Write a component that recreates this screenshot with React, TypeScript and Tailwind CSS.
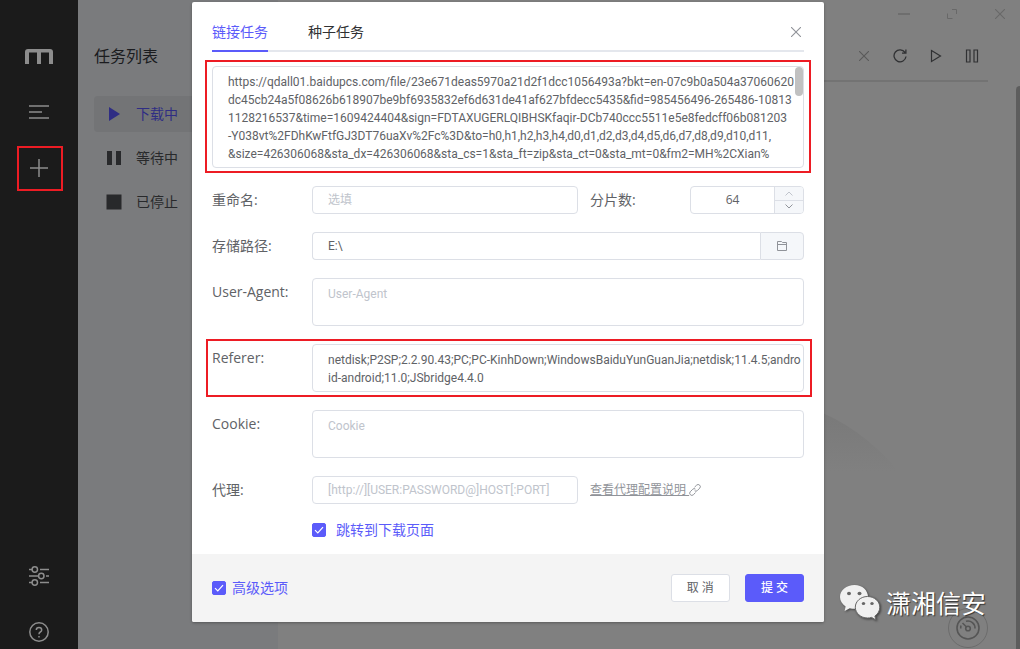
import { useState } from "react";
import type { ReactNode } from "react";

const SOURCE_URL = [
  "https://qdall01.baidupcs.com/file/23e671deas5970a21d2f1dcc1056493a?bkt=en-07c9b0a504a37060620",
  "dc45cb24a5f08626b618907be9bf6935832ef6d631de41af627bfdecc5435&fid=985456496-265486-10813",
  "1128216537&time=1609424404&sign=FDTAXUGERLQIBHSKfaqir-DCb740ccc5511e5e8fedcff06b081203",
  "-Y038vt%2FDhKwFtfGJ3DT76uaXv%2Fc%3D&to=h0,h1,h2,h3,h4,d0,d1,d2,d3,d4,d5,d6,d7,d8,d9,d10,d11,",
  "&size=426306068&sta_dx=426306068&sta_cs=1&sta_ft=zip&sta_ct=0&sta_mt=0&fm2=MH%2CXian%",
].join("\n");

const REFERER = [
  "netdisk;P2SP;2.2.90.43;PC;PC-KinhDown;WindowsBaiduYunGuanJia;netdisk;11.4.5;andro",
  "id-android;11.0;JSbridge4.4.0",
].join("\n");

const box =
  "block w-full min-w-0 rounded border border-[#dcdfe6] bg-white px-[15px] font-['Roboto','Noto_Sans_CJK_SC',sans-serif] text-xs text-[#606266] outline-none placeholder:text-[#c0c4cc]";
const singleLine = `${box} h-7`;
const multiLine = `${box} resize-none overflow-hidden whitespace-pre py-1.5 leading-[18px]`;

function Highlight({ className }: { className: string }) {
  return <div className={`pointer-events-none absolute border-2 border-[#ed1c24] ${className}`} />;
}

function Field({ id, label, children }: { id: string; label: string; children: ReactNode }) {
  return (
    <div className="relative flex">
      <label htmlFor={id} className="w-[100px] shrink-0 text-sm leading-7 text-[#606266]">
        {label}
      </label>
      <div className="flex min-w-0 flex-1">{children}</div>
    </div>
  );
}

function Check({ id, label, gap }: { id: string; label: string; gap: string }) {
  const [on, setOn] = useState(true);
  return (
    <label htmlFor={id} className={`flex items-center text-sm leading-4 text-[#5b5bfa] ${gap}`}>
      <span className="relative size-3.5">
        <input
          id={id}
          type="checkbox"
          checked={on}
          onChange={() => setOn(!on)}
          className="block size-3.5 appearance-none rounded-xs border border-[#dcdfe6] bg-white checked:border-[#5b5bfa] checked:bg-[#5b5bfa]"
        />
        {on && (
          <svg viewBox="0 0 14 14" className="pointer-events-none absolute inset-0 size-3.5" fill="none" stroke="#fff" strokeWidth="1.2">
            <path d="M3 7.2 5.8 10 11 4.2" />
          </svg>
        )}
      </span>
      {label}
    </label>
  );
}

function Rail() {
  const item = "flex h-5 w-full items-center justify-center";
  return (
    <nav className="flex w-[78px] shrink-0 flex-col bg-[#1b1b1b] pt-[46px] pb-[7px] text-[#8d8d8d]">
      <div className={item}>
        <svg width="28" height="15" viewBox="0 0 28 15" fill="none" stroke="currentColor">
          <path d="M2 15V3M14 3v12M26 15V3" strokeWidth="4" />
          <path d="M0 3.5V3Q0 0 3 0H25Q28 0 28 3V3.5Z" fill="currentColor" stroke="none" />
        </svg>
      </div>
      <button aria-label="列表" className={`${item} mt-9`}>
        <svg width="20" height="14" viewBox="0 0 20 14" stroke="currentColor" strokeWidth="1.5">
          <path d="M0 1H20M0 7H13M0 13H20" />
        </svg>
      </button>
      <button aria-label="新建" className={`${item} relative mt-9`}>
        <svg width="18" height="18" viewBox="0 0 18 18" stroke="currentColor" strokeWidth="1.5">
          <path d="M0 9H18M9 0V18" />
        </svg>
        <Highlight className="-top-3 right-[15px] -bottom-[13px] left-[17px]" />
      </button>
      <button aria-label="设置" className={`${item} mt-auto`}>
        <svg width="20" height="20" viewBox="0 0 20 20" fill="none" stroke="currentColor" strokeWidth="1.5">
          <path d="M0 3.5H3M11 3.5H20M0 10H9.5M17 10H20M0 16.5H3M11 16.5H20" />
          <circle cx="5.8" cy="3.5" r="2.7" />
          <circle cx="12.3" cy="10" r="2.7" />
          <circle cx="5.8" cy="16.5" r="2.7" />
        </svg>
      </button>
      <button aria-label="帮助" className={`${item} mt-9`}>
        <svg width="20" height="20" viewBox="0 0 20 20" fill="none" stroke="currentColor" strokeWidth="1.5">
          <circle cx="10" cy="10" r="9.2" />
          <path d="M7.3 8Q7.3 5.5 10 5.5T12.7 8Q12.7 9.2 11.3 10T10 12.3" />
          <path d="M10 14V15.6" />
        </svg>
      </button>
    </nav>
  );
}

function TaskMenu() {
  const item = "flex h-9 w-full items-center gap-3.5 rounded-l px-3 text-sm";
  return (
    <aside className="w-[200px] shrink-0 bg-[#7a7b7d] pt-11 pl-4 text-[#28292b]">
      <h2 className="text-base leading-6 text-[#1b1c1f]">任务列表</h2>
      <ul className="mt-7 space-y-2">
        <li>
          <button className={`${item} bg-[#737476] text-[#2f2d84]`}>
            <svg width="16" height="16" viewBox="0 0 16 16" fill="currentColor">
              <path d="M3 1 14 8 3 15Z" />
            </svg>
            下载中
          </button>
        </li>
        <li>
          <button className={item}>
            <svg width="16" height="16" viewBox="0 0 16 16" fill="currentColor">
              <path d="M1 1H6V15H1ZM10 1H15V15H10Z" />
            </svg>
            等待中
          </button>
        </li>
        <li>
          <button className={item}>
            <svg width="16" height="16" viewBox="0 0 16 16" fill="currentColor">
              <path d="M.5 .5H15.5V15.5H.5Z" />
            </svg>
            已停止
          </button>
        </li>
      </ul>
    </aside>
  );
}

function TaskArea() {
  const tool = "flex size-5 items-center justify-center";
  return (
    <main className="relative min-w-0 flex-1 bg-[#808080] px-7">
      <div className="-mr-[22px] flex h-7 items-center justify-end gap-7 text-[#686868]">
        <button aria-label="最小化" className={tool}>
          <svg width="12" height="12" viewBox="0 0 12 12" stroke="currentColor" strokeWidth="1.5">
            <path d="M0 6H12" />
          </svg>
        </button>
        <button aria-label="最大化" className={tool}>
          <svg width="10" height="10" viewBox="0 0 10 10" fill="none" stroke="currentColor">
            <path d="M5 .5H9.5V5M.5 4.500V9.5H5.500" />
          </svg>
        </button>
        <button aria-label="关闭窗口" className={tool}>
          <svg width="10" height="10" viewBox="0 0 10 10" stroke="currentColor" strokeWidth="1.1">
            <path d="M0 0 10 10M10 0 0 10" />
          </svg>
        </button>
      </div>
      <div className="flex h-[54px] items-center justify-end gap-4 border-b-2 border-[#737373] pt-1 pr-1.5 text-[#303133]">
        <button aria-label="删除" className={`${tool} text-[#5a5a5a]`}>
          <svg width="10" height="10" viewBox="0 0 10 10" stroke="currentColor" strokeWidth="1.1">
            <path d="M0 0 10 10M10 0 0 10" />
          </svg>
        </button>
        <button aria-label="刷新" className={tool}>
          <svg width="14" height="14" viewBox="0 0 14 14" fill="none" stroke="currentColor" strokeWidth="1.3">
            <path d="M12 3.4A6 6 0 1 0 13 7.5M12.9 .6V4.2H9" />
          </svg>
        </button>
        <button aria-label="开始" className={tool}>
          <svg width="12" height="14" viewBox="0 0 12 14" fill="none" stroke="currentColor" strokeWidth="1.2">
            <path d="M1.5 1.5 10.5 7 1.5 12.5Z" />
          </svg>
        </button>
        <button aria-label="暂停" className={tool}>
          <svg width="14" height="14" viewBox="0 0 14 14" fill="none" stroke="currentColor" strokeWidth="1.2">
            <path d="M1.5 1H5V13H1.5ZM9 1H12.5V13H9Z" />
          </svg>
        </button>
      </div>
      <svg viewBox="0 0 280 64" className="absolute top-[408px] right-[117px] h-16 w-[280px]">
        <defs>
          <linearGradient id="hill" x1="0" y1="0" x2="0" y2="1">
            <stop offset="0" stopColor="#787878" />
            <stop offset="1" stopColor="#808080" />
          </linearGradient>
        </defs>
        <path d="M0 64Q60 -8 160 -8Q230 4 280 64Z" fill="url(#hill)" />
      </svg>
      <button aria-label="速度" className="absolute right-7 bottom-px size-10 rounded-full border border-[#6c6c6c]">
        <svg viewBox="0 0 24 24" className="m-auto size-6" fill="none" stroke="#555" strokeWidth="1.6">
          <circle cx="12" cy="12" r="11" />
          <circle cx="12" cy="12.5" r="2.3" />
          <path d="M10.3 10.7 6.5 7M10 5.3A7 7 0 0 1 19 12.5M5 9.5A7 7 0 0 0 4.8 12.5" />
        </svg>
      </button>
    </main>
  );
}

function Dialog() {
  const [url, setUrl] = useState(SOURCE_URL);
  const [referer, setReferer] = useState(REFERER);
  const [path, setPath] = useState("E:\\");
  const [parts, setParts] = useState(64);
  const step = "flex flex-1 items-center justify-center";
  return (
    <div role="dialog" aria-label="新建任务" className="w-[632px] max-w-full rounded-xs bg-white shadow-[0_1px_3px_rgba(0,0,0,0.3)]">
      <form className="flex flex-col gap-[18px] px-5 pt-3 pb-4" onSubmit={(e) => e.preventDefault()}>
        <header className="-mb-1 flex h-[38px] gap-10 border-b-2 border-[#e4e7ed] text-sm leading-9">
          <button type="button" className="-mb-0.5 border-b-2 border-[#5b5bfa] text-[#5b5bfa]">
            链接任务
          </button>
          <button type="button" className="text-[#303133]">
            种子任务
          </button>
          <button type="button" aria-label="关闭" className="ml-auto px-[3px] text-[#909399]">
            <svg width="10" height="10" viewBox="0 0 10 10" stroke="currentColor" strokeWidth="1.1">
              <path d="M0 0 10 10M10 0 0 10" />
            </svg>
          </button>
        </header>

        <div className="relative">
          <textarea aria-label="链接" rows={5} value={url} onChange={(e) => setUrl(e.target.value)} className={`${multiLine} h-[102px]`} />
          <div className="absolute top-px right-px h-[29px] w-2 rounded-full bg-[#c1c1c1]" />
          <Highlight className="-inset-x-[7px] -top-1.5 -bottom-[5px]" />
        </div>

        <Field id="rename" label="重命名:">
          <input id="rename" placeholder="选填" className={singleLine} />
          <div className="ml-3 flex w-[214px] shrink-0 justify-between">
            <label htmlFor="parts" className="text-sm leading-7 text-[#606266]">
              分片数:
            </label>
            <div className="flex h-7 w-[114px] overflow-hidden rounded border border-[#dcdfe6]">
              <input
                id="parts"
                value={parts}
                onChange={(e) => setParts(Number(e.target.value) || 0)}
                className="w-full min-w-0 text-center text-xs text-[#606266] outline-none"
              />
              <div className="flex w-[29px] shrink-0 flex-col divide-y divide-[#dcdfe6] border-l border-[#dcdfe6] bg-[#f5f7fa]">
                <button type="button" aria-label="增加" className={`${step} text-[#c0c4cc]`} onClick={() => setParts(parts + 1)}>
                  <svg width="8" height="5" viewBox="0 0 8 5" fill="none" stroke="currentColor">
                    <path d="M.5 4.5 4 1 7.5 4.5" />
                  </svg>
                </button>
                <button type="button" aria-label="减少" className={`${step} text-[#909399]`} onClick={() => setParts(parts - 1)}>
                  <svg width="8" height="5" viewBox="0 0 8 5" fill="none" stroke="currentColor">
                    <path d="M.5 .5 4 4 7.5 .5" />
                  </svg>
                </button>
              </div>
            </div>
          </div>
        </Field>

        <Field id="path" label="存储路径:">
          <input id="path" value={path} onChange={(e) => setPath(e.target.value)} className={`${singleLine} rounded-r-none border-r-0`} />
          <button
            type="button"
            aria-label="选择文件夹"
            className="flex w-11 shrink-0 items-center justify-center rounded-r border border-[#dcdfe6] bg-[#f5f7fa] text-[#909399]"
          >
            <svg width="10" height="10" viewBox="0 0 10 10" fill="none" stroke="currentColor">
              <path d="M.5 .5H4.5L5.5 1.5H9.5V9.5H.5ZM.5 3.5H9.5" />
            </svg>
          </button>
        </Field>

        <Field id="agent" label="User-Agent:">
          <textarea id="agent" rows={2} placeholder="User-Agent" className={`${multiLine} h-12`} />
        </Field>

        <Field id="referer" label="Referer:">
          <textarea id="referer" rows={2} value={referer} onChange={(e) => setReferer(e.target.value)} className={`${multiLine} h-12`} />
          <Highlight className="-top-[5px] -right-2 -bottom-[5px] -left-1.5" />
        </Field>

        <Field id="cookie" label="Cookie:">
          <textarea id="cookie" rows={2} placeholder="Cookie" className={`${multiLine} h-12`} />
        </Field>

        <Field id="proxy" label="代理:">
          <input id="proxy" placeholder="[http://][USER:PASSWORD@]HOST[:PORT]" className={singleLine} />
          <div className="ml-3 flex w-[214px] shrink-0 items-center">
            <a href="#proxy" className="flex items-center text-xs text-[#909399]">
              <span className="whitespace-pre underline">查看代理配置说明 </span>
              <svg width="12" height="12" viewBox="0 0 12 12" fill="none" stroke="currentColor">
                <path d="M5.5 3.2 7.6 1.2A2.1 2.1 0 0 1 10.7 4.2L8.3 6.6A2 2 0 0 1 5.7 6.8M6.5 8.6 4.4 10.7A2.1 2.1 0 0 1 1.3 7.7L3.7 5.3A2 2 0 0 1 6.4 5.1" />
              </svg>
            </a>
          </div>
        </Field>

        <div className="pl-[100px]">
          <Check id="jump" label="跳转到下载页面" gap="gap-2.5" />
        </div>
      </form>

      <footer className="flex items-center justify-between rounded-b-xs bg-[#f4f4f4] px-5 py-5">
        <Check id="advanced" label="高级选项" gap="gap-1.5" />
        <div className="flex gap-[15px] text-xs">
          <button className="h-7 rounded-[3px] border border-[#dcdfe6] bg-white px-[15px] whitespace-pre text-[#606266]">取 消</button>
          <button className="h-7 rounded-[3px] border border-[#5b5bfa] bg-[#5b5bfa] px-[15px] font-medium whitespace-pre text-white">提 交</button>
        </div>
      </footer>
    </div>
  );
}

function Watermark() {
  return (
    <div className="pointer-events-none absolute right-[30px] bottom-7 flex items-center gap-1.5">
      <svg width="40" height="36" viewBox="0 0 40 36" className="drop-shadow-[1px_1px_1px_rgba(0,0,0,0.5)]">
        <path d="M14.5 0C6.5 0 0 5.3 0 12c0 3.8 2.2 7.2 5.6 9.4L4.6 26l5.2-2.8c1.5.4 3.1.6 4.7.6C22.5 23.8 28 18.5 28 12S22.5 0 14.5 0Z" fill="#f0f0f0" />
        <path d="M27.5 11.5C20.8 11.5 15.3 16.3 15.3 22.2S20.8 33 27.5 33c1.5 0 2.8-.2 4.1-.6L36 35l-1.1-4C37.9 29 39.8 25.8 39.8 22.2 39.8 16.3 34.3 11.5 27.5 11.5Z" fill="#f0f0f0" stroke="#666" strokeWidth="1" />
        <g fill="#666">
          <ellipse cx="9" cy="8.5" rx="2" ry="1.7" />
          <ellipse cx="19.5" cy="8.5" rx="2" ry="1.7" />
          <ellipse cx="23.5" cy="18.5" rx="1.7" ry="1.5" />
          <ellipse cx="32" cy="18.5" rx="1.7" ry="1.5" />
        </g>
      </svg>
      <span className="text-[25px] leading-9 text-white [text-shadow:1px_1px_1px_rgba(0,0,0,0.6)]">潇湘信安</span>
    </div>
  );
}

export default function App() {
  return (
    <div className="flex min-h-screen bg-[#808080] font-['Open_Sans','Noto_Sans_CJK_SC',sans-serif]">
      <div className="relative flex min-w-0 flex-1">
        <Rail />
        <TaskMenu />
        <TaskArea />
        <div className="absolute inset-0 flex items-start justify-center pt-0.5">
          <Dialog />
        </div>
        <Watermark />
      </div>
      <div className="flex w-1 shrink-0 flex-col pt-[86px]">
        <div className="flex-1 rounded-tl bg-[#5d5d5d]" />
      </div>
    </div>
  );
}
